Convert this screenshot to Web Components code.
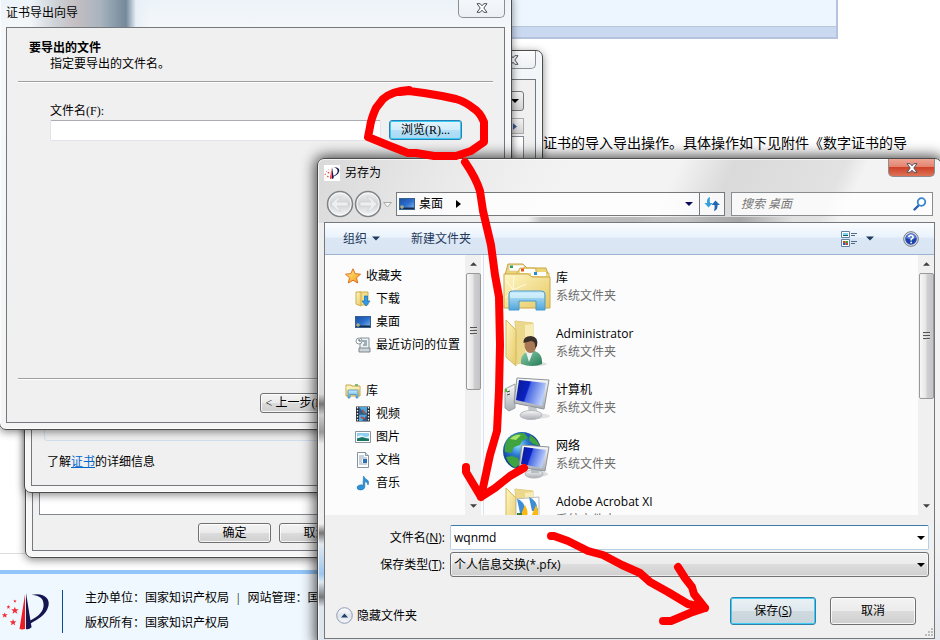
<!DOCTYPE html>
<html lang="zh-CN">
<head>
<meta charset="utf-8">
<title>另存为</title>
<style>
html, body { margin: 0; height: 100%; overflow: hidden; }
body { font: 12px/18px "Open Sans", "Noto Sans CJK SC", sans-serif; color: #000; background: #fff; }
</style>
</head>
<body>
<desktop-scene></desktop-scene>

<script>
const define = (name, html, setup) => {
  const t = document.createElement('template');
  t.innerHTML = '<style>*{box-sizing:border-box}</style>' + html;
  customElements.define(name, class extends HTMLElement {
    constructor() {
      super();
      this.attachShadow({ mode: 'open' }).append(t.content.cloneNode(true));
    }
    connectedCallback() { if (setup) setup(this, this.shadowRoot); }
  });
};

const FOLDER_OPEN = `<path d="M12 2 30 4V41L14 45Z" fill="#ecd88b" stroke="#e3cd82"/><path d="M22 6 30 5V41L22 43Z" fill="#f7ecb6"/><path d="M3 1 13 11V47L3 38Z" fill="url(#y)" stroke="#d6b95c"/>`;
const Y = `<linearGradient id="y" x1="0" y1="0" x2="1" y2="1"><stop offset="0" stop-color="#fff6c4"/><stop offset="1" stop-color="#e6c964"/></linearGradient>`;
const B = `<linearGradient id="b" x1="0" y1="0" x2="1" y2=".3"><stop offset="0" stop-color="#0a1a8e"/><stop offset=".45" stop-color="#0b22c4"/><stop offset=".5" stop-color="#4767e4"/><stop offset="1" stop-color="#b9cdfa"/></linearGradient>`;
const S = `<linearGradient id="s" x1="0" y1="0" x2="0" y2="1"><stop offset="0" stop-color="#fafafa"/><stop offset="1" stop-color="#a9adb3"/></linearGradient>`;
const C = `<linearGradient id="c" x1="0" y1="0" x2="0" y2="1"><stop offset="0" stop-color="#c9ecfb"/><stop offset="1" stop-color="#4fa6dc"/></linearGradient>`;
const LOGO = `<path d="M26 2 20 40Q23 41 26 40Z" fill="#ee1c25"/><path d="M27 1 27 40Q30 41 33 38Z" fill="#15154f"/><path d="M33 3C46 0 54 7 51 16C48 26 40 29 32 34L31 31C41 26 46 21 46 14C46 7 42 4 33 3Z" fill="#15154f"/>
<g fill="#f0303c"><path d="M15 16l1 2.600 3 0-2.300 2 1 2.900-2.700-1.600-2.500 1.600.8-2.900-2.300-2 2.900 0z"/><path d="M13 29l1 2.400 2.700 0-2.100 1.900.8 2.600-2.400-1.400-2.300 1.400.8-2.600-2.100-1.900 2.700 0z"/><path d="M8 14l.6 1.400 1.500 0-1.200 1 .5 1.500-1.400-.8-1.300.8.4-1.500-1.200-1 1.500 0z"/><path d="M4 22l.9 2 2.300 0-1.800 1.500.7 2.200-2.100-1.200-2 1.200.7-2.200-1.800-1.500 2.300 0z"/><path d="M15 8l.5 1.200 1.300 0-1 .9.400 1.300-1.200-.7-1.100.7.400-1.300-1-.9 1.300 0z"/></g>`;

const ICONS = {
  logo: ['0 0 54 42', LOGO],
  app: ['0 0 54 42', LOGO],
  desktop: ['0 0 16 16', `<linearGradient id="d" x1="0" y1="0" x2="1" y2="1"><stop offset="0" stop-color="#1b4f9f"/><stop offset=".5" stop-color="#2b6dcc"/><stop offset="1" stop-color="#86bdf0"/></linearGradient><rect x=".5" y="2.500" width="15" height="11" fill="url(#d)" stroke="#35608f"/><path d="M1 11.500h14V13H1z" fill="#172a45"/><circle cx="3" cy="11" r="1.800" fill="#3fb0ef"/><path d="M3 9.200v3.600M1.200 11H5" stroke="#f5a03a" stroke-width=".8"/>`],
  star: ['0 0 16 16', `<linearGradient id="a" x1="0" y1="0" x2="1" y2="1"><stop offset="0" stop-color="#fff08a"/><stop offset="1" stop-color="#f39a18"/></linearGradient><path d="M8 .8 10.200 5.700 15.500 6.200 11.500 9.800 12.700 15 8 12.200 3.300 15 4.500 9.800.5 6.200 5.800 5.700Z" fill="url(#a)" stroke="#dd6f20"/>`],
  download: ['0 0 16 16', Y + `<path d="M4 1h9v13H4z" fill="#f0dd90" stroke="#cfb050"/><path d="M1 1h5v14L1 13Z" fill="url(#y)" stroke="#cfae48"/><path d="M9.500 5h3v5H15l-4 5-4-5h2.500z" fill="#2f9be6" stroke="#176bb2" stroke-width=".7"/>`],
  recent: ['0 0 16 16', `<path d="M5 1h9v12H5z" fill="#eef2f4" stroke="#849096"/><path d="M7 4h5M9 6h3M8 8h4" stroke="#4c6b83"/><path d="M4 11h11v4H4z" fill="#cdd4d8" stroke="#7c888f"/><circle cx="4" cy="4" r="3" fill="#fff" stroke="#8b979d"/><path d="M4 2v2h2" stroke="#4b5c68" fill="none"/>`],
  library: ['0 0 16 16', Y + C + `<path d="M1 2h5l1 1h8v10H1z" fill="url(#y)" stroke="#c9a84b"/><path d="M1 5h14" stroke="#fff8d0"/><path d="M10 2h3" stroke="#57a957" stroke-width="1.500"/><path d="M3 15V8Q3 7 4 7h8q1 0 1 1v7h-2v-3.500H5V15z" fill="url(#c)" stroke="#4893c6" stroke-width=".8"/>`],
  video: ['0 0 16 16', `<path d="M1 .5h14v15H1z" fill="#2c2f33"/><path d="M4 1h8v6.500H4zM4 8.500h8V15H4z" fill="#4fa6df"/><path d="M4 1l5 6.500H4zM12 9l-5 6h5z" fill="#275c98"/><path d="M7 4l3 3M6 11l4 2" stroke="#b9462c" stroke-width="1.500"/><path d="M2.500 1v14M13.500 1v14" stroke="#f2f2f2" stroke-width="1.300" stroke-dasharray="1.500 1.500"/>`],
  picture: ['0 0 16 16', `<path d="M.5 2.500h15v11H.5z" fill="#fff" stroke="#8a949c"/><path d="M2 4h12v8H2z" fill="#8fd0f4"/><path d="M2 8Q5 5 8 7T14 7V9H2z" fill="#e4f6fd"/><path d="M2 9.500 7 8l7 2V12H2z" fill="#1a7563"/>`],
  doc: ['0 0 16 16', `<path d="M2.500.5h8l3 3v12h-11z" fill="#fff" stroke="#8693a0"/><path d="M10.500.5v3h3" fill="#dce5ee" stroke="#8693a0"/><path d="M4 4h5M4 6h8M4 8h3M4 10h3M4 12h8" stroke="#8da3b8"/><path d="M8 7h4v4H8z" fill="#2d6fb3"/>`],
  music: ['0 0 16 16', `<path d="M8.500 1Q10 4 12.500 5 14.500 7 13 10 13 7 9.800 6.500V12Q9.500 14.500 6 15 2.500 15 2 13 2 10.500 5 10 7 9.500 8 10.500Z" fill="#2e92d6" stroke="#1c72b4" stroke-width=".6"/>`],
  libraryBig: ['0 0 48 48', Y + C + `<path d="M2 12 5 1H20L24 5H43L46 14Z" fill="#eed578" stroke="#c7a748"/><path d="M6 2h15v6H6z" fill="#fff" stroke="#d4c58c" stroke-width=".6"/><path d="M14 10 17 5h15l3 5h11v6H14z" fill="#f0d97e" stroke="#c9aa4c" stroke-width=".8"/><path d="M17 6h15v4H17zM28 9h15v4H28z" fill="#fff"/><path d="M7 2.500h3v2.500H7z" fill="#2fa457"/><path d="M18 5.500h3v3h-3z" fill="#e2571b"/><path d="M31 9h3v3h-3z" fill="#258bd2"/><path d="M1 11h24l4 3h18v31H1z" fill="url(#y)" stroke="#c9a84b"/><path d="M10 27 3 17M10 27 11 13M10 27 23 21M10 27 2 35" stroke="#fffbe0"/><path d="M6 47V31Q6 28 9 28h29q4 0 4 3v16H33V38H16v9z" fill="url(#c)" stroke="#4a9acd"/><path d="M7 30h34v5H7z" fill="#d9f3fc" opacity=".7"/>`],
  user: ['0 0 48 48', Y + `<linearGradient id="g" x1="0" y1="0" x2="1" y2="1"><stop offset="0" stop-color="#8fd0ac"/><stop offset="1" stop-color="#257a57"/></linearGradient><ellipse cx="32" cy="45" rx="12" ry="2" fill="#ddd"/>` + FOLDER_OPEN + `<path d="M18 45Q17 36 24 33L32 32Q40 35 39 45Q30 49 18 45Z" fill="url(#g)"/><path d="M23 33 26 43 30 33Z" fill="#eef2f0"/><ellipse cx="27.500" cy="26" rx="6" ry="8" fill="#a87753"/><path d="M20.500 24Q20 17 28 17 36 18 34 27L32 29Q33 22 28 22Z" fill="#3a2f29"/>`],
  computer: ['0 0 48 48', B + S + `<ellipse cx="32" cy="41" rx="15" ry="3" fill="#e2e2e2"/><path d="M2 14 12 9V33L6 36 2 33Z" fill="url(#s)" stroke="#9b9fa4"/><path d="M4 17l3-1M4 20l3-1" stroke="#444"/><path d="M3 14v3" stroke="#49c625" stroke-width="2"/><path d="M25 32h8l2 6h-9z" fill="#c3c8cd"/><ellipse cx="28" cy="40" rx="11" ry="4.500" fill="url(#s)" stroke="#b7babe"/><path d="M14 3 46 5 41 34 11 28Z" fill="url(#s)" stroke="#8e949c"/><path d="M16 5 43 8 39 31 13 25Z" fill="url(#b)"/>`],
  network: ['0 0 48 48', B + S + `<radialGradient id="e" cx=".4" cy=".35"><stop offset="0" stop-color="#8ddcff"/><stop offset=".5" stop-color="#2d7ed0"/><stop offset="1" stop-color="#0f3b92"/></radialGradient><circle cx="19" cy="20" r="19" fill="url(#e)"/><path d="M5 8Q12 1 21 2L25 7 19 10 17 14 11 16 8 22 2 21Q1 13 5 8ZM27 4Q34 8 37 15L30 13 26 9ZM9 25 15 27 17 33 12 37Q5 33 3 26Z" fill="#3fa33f"/><path d="M7 8Q12 3 18 4L13 9Z" fill="#a9e46b"/><ellipse cx="34" cy="43" rx="11" ry="3" fill="#dcdcdc"/><ellipse cx="31" cy="43" rx="9" ry="4" fill="url(#s)" stroke="#b1b5ba"/><path d="M28 36h7l1 6h-8z" fill="#b7bdc4"/><path d="M19 14 46 16 42 40 16 36Z" fill="url(#s)" stroke="#8e949c"/><path d="M21 16 43 19 39 37 18 33Z" fill="url(#b)"/>`],
  acrobat: ['0 0 48 48', Y + FOLDER_OPEN + `<path d="M13 12 36 10V48H13z" fill="#fff" stroke="#bbb"/><path d="M14 12q8 2 9 14h-6zM26 10q8 3 9 14h-6z" fill="#3c8fd6"/><path d="M22 18q5 8 0 17h-7zM33 18q4 8 0 17h-7z" fill="#fcb80e"/><path d="M14 26h5v22h-5z" fill="#3f7d3a"/>`],
  back: ['0 0 28 28', null], forward: ['0 0 28 28', null],
  refresh: ['0 0 16 16', `<path d="M6 1Q2.500 2 3 7H.5L4.500 11.500 8.500 7H6Q5.500 4 6 1Z" fill="#35a0dd"/><path d="M10 15Q14 14 13.500 9H16L11.500 4.500 7.500 9H10.500Q11 12.500 10 15Z" fill="#2067b4"/>`],
  search: ['0 0 14 14', `<path d="M6 8 1.500 12.500" stroke="#2b5fb0" stroke-width="2.400" stroke-linecap="round"/><circle cx="8.500" cy="5" r="3.800" fill="#fff" stroke="#3787cf" stroke-width="1.800"/>`],
  views: ['0 0 16 16', `<path d="M.5.5h8v6h-8zM.5 8.500h8v7h-8z" fill="#fff" stroke="#6383a6"/><path d="M2 2h5v2H2z" fill="#7ed1ee"/><path d="M2 4h5v1H2z" fill="#175a5b"/><path d="M2 10h2.500v2H2zM4.500 12H7v2H4.500z" fill="#d33d2d"/><path d="M4.500 10H7v2H4.500z" fill="#45a02d"/><path d="M2 12h2.500v2H2z" fill="#2d61c3"/><path d="M10 2.500h6M10 4.500h4M10 10.500h6M10 12.500h4" stroke="#526b87"/>`],
  help: ['0 0 16 16', `<circle cx="8" cy="8" r="7.300" fill="#dfe3ea" stroke="#77797e"/><circle cx="8" cy="8" r="5.800" fill="#1d43ae"/><path d="M3 7Q4 2.500 8 2.500T13 7Q8 9 3 7Z" fill="#5f83da"/><path d="M5.800 6.200Q6 4.200 8 4.200T10.200 6Q10.200 7 8.200 8.200V9.500M8.200 10.800v1.400" stroke="#fff" stroke-width="1.600" fill="none"/>`],
  down: ['0 0 8 4', `<path d="M0 0h8L4 4z" fill="currentColor"/>`],
  up: ['0 0 8 4', `<path d="M0 4h8L4 0z" fill="currentColor"/>`],
  right: ['0 0 5 8', `<path d="M0 0v8l5-4z" fill="currentColor"/>`],
  hollow: ['0 0 9 6', `<path d="M.5.5h8l-4 4.500z" fill="#f5f5f5" stroke="#aaa"/>`],
  collapse: ['0 0 17 17', `<linearGradient id="k" x1="0" y1="0" x2="0" y2="1"><stop offset="0" stop-color="#fff"/><stop offset=".5" stop-color="#dfe3ea"/><stop offset="1" stop-color="#f4f6f9"/></linearGradient><circle cx="8.500" cy="8.500" r="7.800" fill="url(#k)" stroke="#8e9cb5"/><path d="M5 10.500h7l-3.500-4z" fill="#22406d"/>`],
  close: ['0 0 12 10', `<path d="M1 .7h3.200L6 2.800 7.800.7H11L7.800 5 11 9.300H7.800L6 7.200 4.200 9.300H1L4.200 5Z" fill="#fff" stroke="#4c505c"/>`],
  grip: ['0 0 10 9', `<path d="M8 1h2M5 4h2M8 4h2M2 7h2M5 7h2M8 7h2" stroke="#aaa" stroke-width="1.500"/>`]
};
const arrowBtn = d => `<linearGradient id="n" x1="0" y1="0" x2="0" y2="1"><stop offset="0" stop-color="#f0f0f0"/><stop offset=".5" stop-color="#d2d4d6"/><stop offset="1" stop-color="#f6f7f8"/></linearGradient><circle cx="14" cy="14" r="12.500" fill="url(#n)" stroke="#7e8389" stroke-width="1.500"/><circle cx="14" cy="14" r="11" fill="none" stroke="#fff" opacity=".7"/><path d="${d}" fill="#eceeef" stroke="#c9cdd0" stroke-width=".6"/>`;
ICONS.back[1] = arrowBtn('M5 14 12 7H15L11 12H22V16H11L15 21H12Z');
ICONS.forward[1] = arrowBtn('M23 14 16 7H13L17 12H6V16H17L13 21H16Z');

define('shell-icon', `<style>:host{display:block;flex:none;width:16px;height:16px}svg{display:block;width:100%;height:100%}</style>`, (el, root) => {
  if (root.querySelector('svg')) return;
  const [box, art] = ICONS[el.getAttribute('name')];
  const holder = document.createElement('template');
  holder.innerHTML = `<svg viewBox="${box}" aria-hidden="true" fill="none">${art}</svg>`;
  root.append(holder.content);
});

define('win-frame', `<style>
:host{position:absolute;display:flex;flex-direction:column;padding:0 6px 6px;border:1px solid #4c4c4c;border-radius:7px;
 background:var(--glass,linear-gradient(#f3f6f9,#f7f7f7));box-shadow:inset 0 0 0 1px #ffffffb0,var(--shadow,0 2px 8px #0007)}
header{display:flex;align-items:center;gap:5px;height:var(--title,28px);padding-top:var(--title-pad,0)}
h1{flex:1;margin:0;font:inherit}
.close{align-self:flex-start;display:grid;place-items:center;width:47px;height:var(--close,18px);margin-top:var(--close-shift,0);padding:var(--close-pad,0) 0 0;border:1px solid #8b8f94;border-top:0;border-radius:0 0 5px 5px;background:var(--close-bg,linear-gradient(#fff9,#eceff2cc))}
.close shell-icon{width:12px;height:10px}
main{flex:1;min-height:0;display:flex;flex-direction:column;border:1px solid #74777b;background:#f0f0f0}
</style>
<header><slot name="icon"></slot><h1></h1><button class="close" aria-label="关闭"><shell-icon name="close"></shell-icon></button></header>
<slot name="bar"></slot><main><slot></slot></main>`, (el, root) => {
  root.querySelector('h1').textContent = el.getAttribute('heading') || '';
});

define('push-button', `<style>
:host{display:block;flex:none;width:73px;height:20px}
button{display:block;width:100%;height:100%;padding:0;border:1px solid #707070;border-radius:3px;font:inherit;line-height:16px;color:#000;white-space:nowrap;
 background:linear-gradient(#f3f3f3,#ebebeb 49%,#dcdcdc 50%,#cfcfcf);box-shadow:inset 0 0 0 1px #fffc}
:host([kind=hot]) button{border-color:#2c7fae;background:linear-gradient(#e5f5fd,#d0ecfb 49%,#b5e0f8 50%,#a6d8f3);box-shadow:inset 0 0 0 1px #35cdf8}
:host([kind=default]) button{border-color:#3481a8;background:linear-gradient(#eaf1f4,#dfe9ee 49%,#cfdae0 50%,#c7d3db);box-shadow:inset 0 0 0 1px #3ccdf6}
</style><button><slot></slot></button>`);

define('scroll-bar', `<style>
:host{display:flex;flex-direction:column;align-items:center;flex:none;width:16px;background:#f0f0f0;color:#404040}
shell-icon{width:7px;height:4px;margin:7px 0}
.thumb{flex:0 0 var(--thumb,117px);width:15px;display:grid;place-items:center;border:1px solid #999;border-radius:2px;background:linear-gradient(90deg,#f7f7f7,#e6e6e6 45%,#cfcfd1 55%,#c4c4c6)}
.thumb i{width:7px;height:9px;background:repeating-linear-gradient(#555 0 1px,#ddd 1px 2px,transparent 2px 3px)}
.room{flex:1}
</style><shell-icon name="up"></shell-icon><div class="thumb"><i></i></div><div class="room"></div><shell-icon name="down"></shell-icon>`);

const placeIcon = (el, root) => {
  const icon = document.createElement('shell-icon');
  icon.setAttribute('name', el.getAttribute('icon'));
  root.querySelector('.art').replaceChildren(icon);
};
define('nav-item', `<style>
:host{display:flex;align-items:center;gap:5px;height:23px;padding-left:20px;white-space:nowrap}
:host([child]){padding-left:30px}
</style><div class="art"></div><span><slot></slot></span>`, placeIcon);
define('file-item', `<style>
:host{display:flex;align-items:center;gap:5px;flex:none;height:56px}
.art{width:48px;height:48px}.art shell-icon{width:48px;height:48px}
small{display:block;font:inherit;color:#6d6d6d}
</style><div class="art"></div><div><slot></slot><small>系统文件夹</small></div>`, placeIcon);

define('site-page', `<style>
:host{position:absolute;inset:0;display:flex;flex-direction:column;background:#fff;font-family:"Liberation Serif","Noto Sans CJK SC",sans-serif}
.banner{flex:none;height:39px;margin-right:102px;border:solid #b5c3df;border-width:0 2px 2px 0;background:linear-gradient(#edf6fe 26px,#b8c7dc 26px 27px,#c8d9ef 27px,#cbd8f1)}
p{margin:93px 0 0;padding-left:543px;font-size:14px;line-height:24px;white-space:nowrap}
.rule{margin-top:auto;height:17px;border-top:1px solid #ddd}
footer{display:flex;align-items:center;gap:22px;height:70px;padding:8px 0 0 1px;border-top:4px solid #92c5fa;background:#f0f8ff;line-height:25px;white-space:nowrap}
footer shell-icon{width:50px;height:39px;margin-right:-11px}
.bar{width:1px;height:43px;background:#0d4a94}
.line{display:flex;gap:8px}
</style>
<div class="banner"></div>
<p>证书的导入导出操作。具体操作如下见附件《数字证书的导</p>
<div class="rule"></div>
<footer><shell-icon name="logo"></shell-icon><div class="bar"></div>
<div><div class="line"><span>主办单位：国家知识产权局</span><span>|</span><span>网站管理：国</span></div><div class="line">版权所有：国家知识产权局</div></div></footer>`);

define('cert-list-window', `<style>
:host{display:contents}
win-frame{left:25px;top:50px;width:518px;height:508px}
.body{flex:1;display:flex;flex-direction:column;padding:11px 11px 7px 6px}
.purpose{align-self:flex-end;width:200px;height:20px;display:flex}
.purpose shell-icon{width:8px;height:4px}
.purpose button,.tabs button{margin-left:auto;width:18px;padding:0;border:1px solid #777;border-radius:3px;background:linear-gradient(#f3f3f3,#d2d2d2);display:grid;place-items:center}
.tabs{display:flex;height:16px;margin-top:7px}.tabs button{border-color:#aaa;border-radius:0}
.tabs shell-icon{width:4px;height:7px;color:#3a5795}
.list{flex:1;margin:2px 0 8px;border:1px solid #828790;background:#fff}
.row{display:flex;gap:8px;padding-left:159px}
</style>
<win-frame><div class="body"><div class="purpose"><button aria-label="预期目的"><shell-icon name="down"></shell-icon></button></div>
<div class="tabs"><button aria-label="下一个"><shell-icon name="right"></shell-icon></button></div>
<div class="list"></div><div class="row"><push-button>确定</push-button><push-button>取消</push-button></div></div></win-frame>`);

define('cert-info-window', `<style>
:host{display:contents}
win-frame{left:24px;top:60px;width:484px;height:433px}
.body{flex:1;display:flex;flex-direction:column;padding:10px 12px 14px}
.group{flex:1;border:1px solid #d0dfee;border-radius:3px;margin-bottom:12px}
p{margin:0 0 0 3px}a{color:#06c}
</style>
<win-frame><div class="body"><div class="group"></div><p>了解<a href="#cert">证书</a>的详细信息</p></div></win-frame>`);

define('export-wizard', `<style>
:host{display:contents}
win-frame{left:-1px;top:-8px;width:513px;height:438px;font-family:"Liberation Serif","Noto Sans CJK SC",sans-serif;--title:34px;--title-pad:6px;--close:25px;--close-shift:-6px;--close-pad:5px;
 --glass:linear-gradient(90deg,transparent 30px,#cdd3d8 55px,#c5bfc2 75px,#a9b4bf 100px,#74899b 126px,#e8f0f7 136px,transparent 150px) 0 0/100% 34px no-repeat,linear-gradient(#eaf2f9,#f6f8fa 40px,#f4f4f4)}
.body{flex:1;display:flex;flex-direction:column;padding:12px 11px 9px}
h2{margin:0 0 0 11px;font:bold 12px/16px "Liberation Serif","Noto Sans CJK SC",sans-serif}
.sub{margin:0 0 0 32px;line-height:16px}
hr{width:100%;margin:9px 0 20px;border:0;height:2px;background:linear-gradient(#a0a0a0 50%,#fff 50%)}
label{display:block;margin-left:32px;line-height:17px}
.field{display:flex;gap:8px;padding:0 31px 0 32px}
input{flex:1;min-width:0;height:21px;border:1px solid #e2e3ea;border-top-color:#abadb3;border-radius:2px;background:#fff}
.end{margin:auto 0 13px}.row{padding-left:242px}
</style>
<win-frame heading="证书导出向导"><div class="body"><h2>要导出的文件</h2><p class="sub">指定要导出的文件名。</p><hr>
<label for="f">文件名(F):</label><div class="field"><input id="f"><push-button kind="hot">浏览(R)...</push-button></div>
<hr class="end"><div class="row"><push-button>&lt; 上一步(B)</push-button></div></div></win-frame>`);

define('save-dialog', `<style>
:host{display:contents}
win-frame{left:317px;right:-2px;top:158px;bottom:-6px;--close-bg:linear-gradient(#efa595,#e38471 45%,#cf4129 50%,#dd7355);--shadow:0 0 14px 2px #000b;
 --glass:linear-gradient(90deg,transparent,#9998 5%,#8888 40%,#9997 60%,#7778 80%,transparent) 210px 58px/265px 5px no-repeat,
 linear-gradient(115deg,#d9d9d9 0,#eaeaea 130px,transparent 230px,transparent 330px,#dadada 380px,#e2e2e2 480px,#f3f3f3 500px) 0 0/100% 64px no-repeat,
 linear-gradient(#eee 170px,#d8d8d8 235px,#777 245px,#ccc 256px,#999 273px,#ececec 285px,#eee 365px,#777 374px,#e3e8ee 385px,#9cc6ee 415px,#dce7f1 423px,#777 438px,#dfe6ee 448px) 0 0/8px 100% no-repeat,
 linear-gradient(#f3f3f3 360px,#e3e8ee)}
.app{background:#fff}
.bar{display:flex;align-items:center;height:24px;margin:5px 2px 6px 2px}
.bar .round{width:28px;height:28px}
.bar button{padding:0;border:0;background:none;flex:none}
.bar .hist{width:9px;height:6px;margin:2px 4px 0 1px}
.addr,.find{display:flex;align-items:center;height:24px;border:1px solid #76797c;background:#fffc}
.addr{flex:1;min-width:0;margin-right:6px;padding-left:2px}
.addr .r{width:5px;height:8px;margin-left:13px}
.addr .place{margin-left:4px}
.addr .d{width:8px;height:4px;margin:0 6px 0 auto;color:#0b0b5c}
.addr button{display:grid;place-items:center;width:25px;height:22px;border-left:1px solid #76797c}
.find{flex:0 0 202px;padding:0 5px 0 9px;border-color:#8a8d90}
.find input{flex:1;min-width:0;padding:0;border:0;background:none;outline:0;font:italic 12px/18px "Open Sans","Noto Sans CJK SC",sans-serif}
.find input::placeholder{color:#777;opacity:1}
.find shell-icon{width:14px;height:14px}
.tools{flex:none;display:flex;align-items:center;height:32px;padding:0 15px 0 18px;border-bottom:1px solid #9eb3d0;background:linear-gradient(#fbfdff,#e9f2fc 45%,#dce7f5 50%,#dae5f4);color:#1e395b}
.tools button{display:flex;align-items:center;gap:5px;padding:0;border:0;background:none;font:inherit;color:inherit}
.tools .t{width:8px;height:5px}.tools .new{margin-left:31px}.tools .view{margin-left:auto;gap:9px}.tools .help{margin-left:29px}
.panes{flex:1;min-height:0;display:flex;background:#fcfcfc;overflow:hidden}
nav{flex:0 0 140px;padding-top:9px}.gap{height:23px}
.files{flex:1;display:flex;flex-direction:column;margin-left:2px;padding:4px 0 0 19px;border-left:1px solid #d6e5f5;overflow:hidden}
form{flex:none;display:grid;grid-template-columns:120px 1fr;gap:2px 5px;padding:10px 5px 0 0}
label{align-self:center;text-align:right}
input.name,select{width:100%;height:25px;padding:0 3px;font:inherit;color:#000}
.combo{display:grid;grid-template-columns:1fr 12px;align-items:center}
.combo>*{grid-row:1}
.combo>:first-child{grid-column:1/3}
.combo shell-icon{grid-column:2;width:8px;height:4px;z-index:1;pointer-events:none}
input.name{border:1px solid #b5cfe7;border-top-color:#3d7bad;border-radius:2px;background:#fff}
select{appearance:none;border:1px solid #707070;border-radius:3px;background:linear-gradient(#f2f2f2,#ebebeb 49%,#ddd 50%,#cfcfcf);box-shadow:inset 0 0 0 1px #fff9}
.foot{flex:none;display:flex;align-items:center;gap:14px;padding:20px 18px 0 11px}
.hide{display:flex;align-items:center;gap:4px;margin:9px auto 0 0;padding:0;border:0;background:none;font:inherit}
.hide shell-icon{width:17px;height:17px}
.foot push-button{width:86px;height:28px}
.size{align-self:flex-end;width:10px;height:9px;margin:3px 1px 1px 0}
</style>
<win-frame heading="另存为">
<shell-icon slot="icon" class="app" name="app"></shell-icon>
<div slot="bar" class="bar"><button aria-label="后退"><shell-icon class="round" name="back"></shell-icon></button><button aria-label="前进"><shell-icon class="round" name="forward"></shell-icon></button><shell-icon class="hist" name="hollow"></shell-icon>
<div class="addr"><shell-icon name="desktop"></shell-icon><span class="place">桌面</span><shell-icon class="r" name="right"></shell-icon><shell-icon class="d" name="down"></shell-icon><button aria-label="刷新"><shell-icon name="refresh"></shell-icon></button></div>
<div class="find"><input type="search" aria-label="搜索" placeholder="搜索 桌面"><shell-icon name="search"></shell-icon></div></div>
<div class="tools"><button>组织<shell-icon class="t" name="down"></shell-icon></button><button class="new">新建文件夹</button><button class="view" aria-label="更改视图"><shell-icon name="views"></shell-icon><shell-icon class="t" name="down"></shell-icon></button><button class="help" aria-label="帮助"><shell-icon name="help"></shell-icon></button></div>
<div class="panes"><nav>
<nav-item icon="star">收藏夹</nav-item><nav-item child icon="download">下载</nav-item><nav-item child icon="desktop">桌面</nav-item><nav-item child icon="recent">最近访问的位置</nav-item>
<div class="gap"></div>
<nav-item icon="library">库</nav-item><nav-item child icon="video">视频</nav-item><nav-item child icon="picture">图片</nav-item><nav-item child icon="doc">文档</nav-item><nav-item child icon="music">音乐</nav-item></nav>
<scroll-bar></scroll-bar>
<div class="files"><file-item icon="libraryBig">库</file-item><file-item icon="user">Administrator</file-item><file-item icon="computer">计算机</file-item><file-item icon="network">网络</file-item><file-item icon="acrobat">Adobe Acrobat XI</file-item></div>
<scroll-bar style="--thumb:126px"></scroll-bar></div>
<form><label for="n">文件名(<u>N</u>):</label><div class="combo"><input class="name" id="n" value="wqnmd"><shell-icon name="down"></shell-icon></div>
<label for="t">保存类型(<u>T</u>):</label><div class="combo"><select id="t"><option>个人信息交换(*.pfx)</option></select><shell-icon name="down"></shell-icon></div></form>
<div class="foot"><button class="hide"><shell-icon name="collapse"></shell-icon>隐藏文件夹</button><push-button kind="default">保存(<u>S</u>)</push-button><push-button>取消</push-button></div>
<shell-icon class="size" name="grip"></shell-icon>
</win-frame>`);

define('red-marks', `<style>:host{position:absolute;left:0;top:0;pointer-events:none}svg{display:block}</style>
<svg width="940" height="640" fill="none" stroke="#f00" stroke-width="8" stroke-linecap="round" stroke-linejoin="round" aria-hidden="true">
<path d="M409 90Q392 91 383 99L376 108Q371 119 370 127L368 137 390 146 408 153H416L434 156H456L471 151 484 142V122Q480 112 473 108 466 102 456 99L442 96 424 93 409 91 400 92"/>
<path d="M465 162Q476 178 480 191L483 211 491 245 495 275 499 297 500 345 499 390 497 431 490 455 481 497M466 467V472L481 497 495 488 510 476 524 468"/>
<path d="M551 536H554L568 541 588 551 603 555 622 565 640 573 650 582 668 592 688 604 705 608M678 567 685 578 692 587 694 594 705 608 690 613 671 621H663"/>
</svg>`);

define('desktop-scene', `<style>:host{display:block;position:relative;height:100%;overflow:hidden}</style>
<site-page></site-page><cert-list-window></cert-list-window><cert-info-window></cert-info-window><export-wizard></export-wizard><save-dialog></save-dialog><red-marks></red-marks>`);
</script>
</body>
</html>
